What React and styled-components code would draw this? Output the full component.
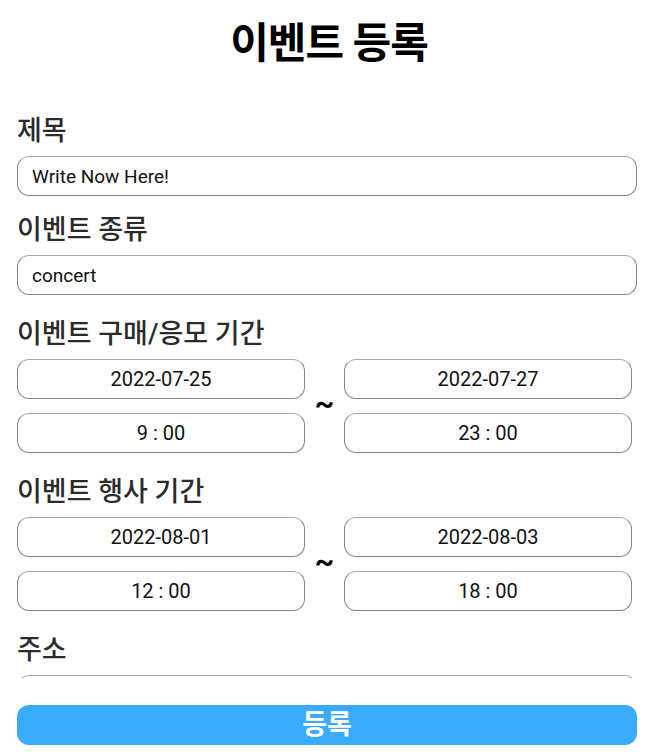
import React from "react";
import styled, { createGlobalStyle } from "styled-components";

const GlobalStyle = createGlobalStyle`
  html, body {
    margin: 0;
    padding: 0;
    background: #ffffff;
  }
  * {
    box-sizing: border-box;
  }
`;

const FONT = `Roboto, "Noto Sans CJK KR", sans-serif`;

const Page = styled.div`
  width: 658px;
  height: 752px;
  display: flex;
  flex-direction: column;
  font-family: ${FONT};
  overflow: hidden;
`;

const Title = styled.h1`
  margin: 0;
  padding-top: 16px;
  height: 113px;
  flex-shrink: 0;
  text-align: center;
  font-size: 42px;
  font-weight: 700;
  letter-spacing: -1px;
  color: #000;
  line-height: 56px;
`;

const Scroll = styled.div`
  flex: 1;
  overflow: hidden;
  padding: 0 21px 0 17px;
`;

const Section = styled.div`
  display: flex;
  flex-direction: column;
  margin-bottom: ${p => (p.$tight ? "16px" : "21px")};
`;

const Label = styled.div`
  font-size: 27px;
  font-weight: 500;
  color: #2b2b2b;
  line-height: 36px;
  margin-bottom: 7px;
`;

const Field = styled.input`
  width: ${p => (p.$half ? "288px" : "100%")};
  height: 40px;
  border: 1px solid #858585;
  border-top-color: #a8a8a8;
  border-radius: 12px;
  padding: 0 14px;
  font-family: ${FONT};
  font-size: ${p => (p.$center ? "20px" : "19px")};
  color: #111;
  background: #fff;
  text-align: ${p => (p.$center ? "center" : "left")};
  outline: none;
`;

const Period = styled.div`
  display: grid;
  grid-template-columns: 288px 39px 288px;
  grid-template-rows: 40px 40px;
  row-gap: 14px;
`;

const Tilde = styled.div`
  grid-column: 2;
  grid-row: 1 / span 2;
  display: flex;
  align-items: center;
  justify-content: center;
  padding-bottom: 6px;
  font-size: 30px;
  font-weight: 700;
  color: #000;
`;

const Footer = styled.div`
  height: 74px;
  flex-shrink: 0;
  padding: 27px 21px 7px 17px;
`;

const Submit = styled.button`
  width: 100%;
  height: 40px;
  border: none;
  border-radius: 12px;
  background: #3aabfd;
  color: #fff;
  font-family: ${FONT};
  font-size: 27px;
  font-weight: 700;
  line-height: 40px;
  padding: 0;
`;

const PeriodInputs = ({ startDate, endDate, startTime, endTime }) => (
  <Period>
    <Field $half $center readOnly value={startDate} style={{ gridColumn: 1 }} />
    <Tilde>~</Tilde>
    <Field $half $center readOnly value={endDate} style={{ gridColumn: 3 }} />
    <Field $half $center readOnly value={startTime} style={{ gridColumn: 1 }} />
    <Field $half $center readOnly value={endTime} style={{ gridColumn: 3 }} />
  </Period>
);

const App = () => (
  <Page>
    <GlobalStyle />
    <Title>이벤트 등록</Title>
    <Scroll>
      <Section $tight>
        <Label>제목</Label>
        <Field readOnly value="Write Now Here!" />
      </Section>
      <Section>
        <Label>이벤트 종류</Label>
        <Field readOnly value="concert" />
      </Section>
      <Section>
        <Label>이벤트 구매/응모 기간</Label>
        <PeriodInputs
          startDate="2022-07-25"
          endDate="2022-07-27"
          startTime="9 : 00"
          endTime="23 : 00"
        />
      </Section>
      <Section>
        <Label>이벤트 행사 기간</Label>
        <PeriodInputs
          startDate="2022-08-01"
          endDate="2022-08-03"
          startTime="12 : 00"
          endTime="18 : 00"
        />
      </Section>
      <Section>
        <Label>주소</Label>
        <Field readOnly value="" />
      </Section>
    </Scroll>
    <Footer>
      <Submit>등록</Submit>
    </Footer>
  </Page>
);

export default App;
